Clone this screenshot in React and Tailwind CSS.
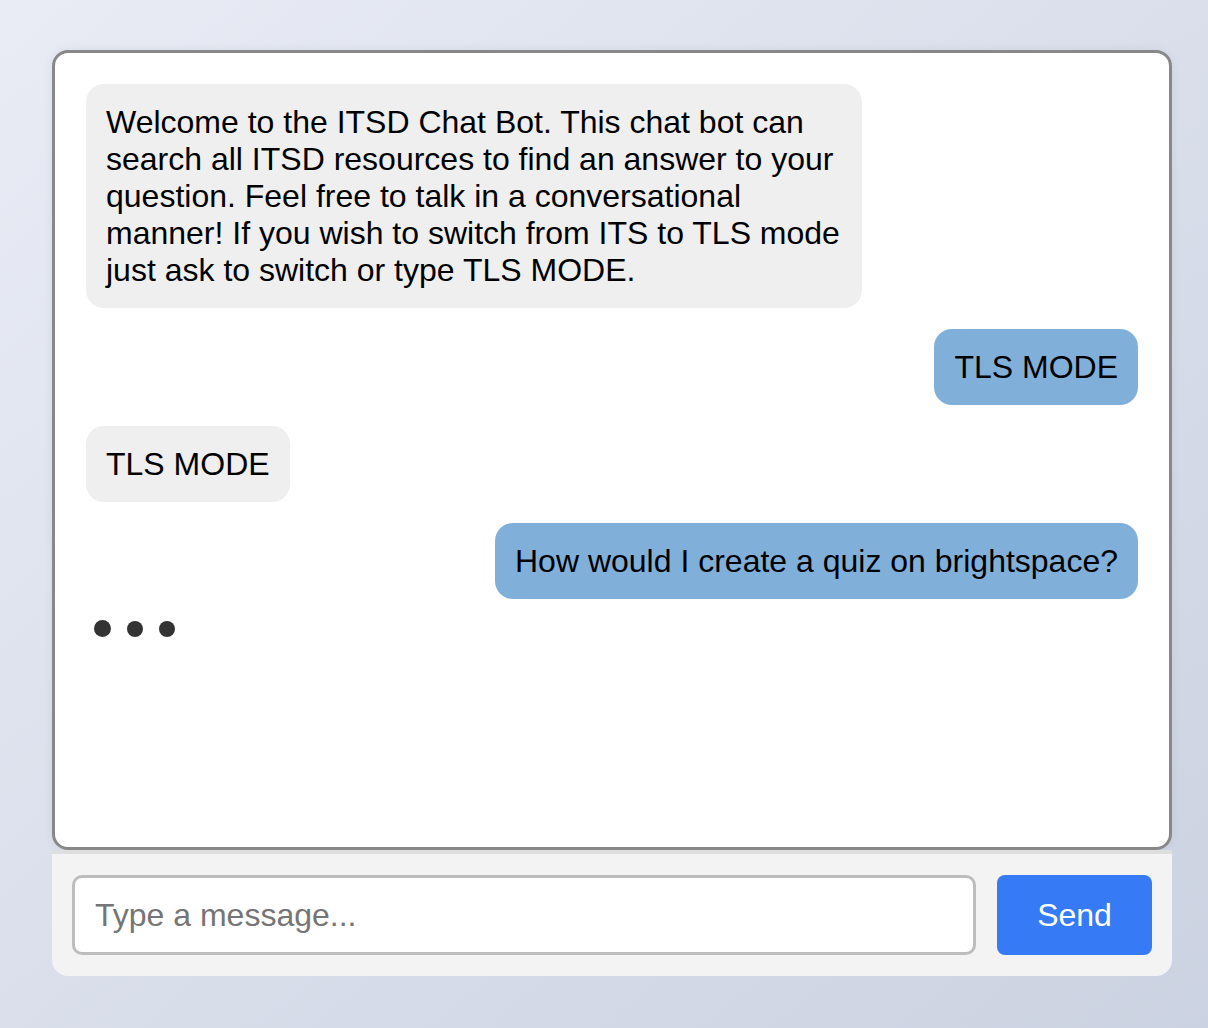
import React from 'react';

const messages = [
  {
    from: 'bot',
    text: 'Welcome to the ITSD Chat Bot. This chat bot can search all ITSD resources to find an answer to your question. Feel free to talk in a conversational manner! If you wish to switch from ITS to TLS mode just ask to switch or type TLS MODE.',
  },
  { from: 'user', text: 'TLS MODE' },
  { from: 'bot', text: 'TLS MODE' },
  { from: 'user', text: 'How would I create a quiz on brightspace?' },
];

export default function App() {
  return (
    <div
      className="min-h-screen w-full bg-gradient-to-br from-[#e9ecf5] to-[#cbd2e1] px-[52px] pt-[50px] pb-[53px]"
      style={{ fontFamily: '"Liberation Sans", Arial, sans-serif' }}
    >
      <div className="w-[1120px]">
        {/* Chat window */}
        <div className="h-[800px] rounded-[16px] border-[3px] border-[#888888] bg-white p-[31px] shadow-[0_0_12px_rgba(0,0,0,0.06)]">
          <div className="flex flex-col gap-[21px]">
            {messages.map((m, i) => (
              <Bubble key={i} from={m.from} text={m.text} />
            ))}
            <div className="flex items-center gap-[16px] pl-[8px]">
              <span className="h-[17px] w-[17px] rounded-full bg-[#333333]" />
              <span className="h-[16px] w-[16px] rounded-full bg-[#333333]" />
              <span className="h-[16px] w-[16px] rounded-full bg-[#333333]" />
            </div>
          </div>
        </div>

        {/* Input bar */}
        <div className="flex items-center gap-[21px] rounded-b-[16px] border-t-[4px] border-[#dedede] bg-[#f3f3f3] px-[20px] pt-[21px] pb-[21px]">
          <input
            autoFocus
            type="text"
            placeholder="Type a message..."
            className="h-[80px] flex-1 rounded-[10px] border-[3px] border-[#bdbdbd] bg-white px-[20px] text-[32px] text-black outline-none placeholder:text-[#757575]"
          />
          <button className="h-[80px] w-[155px] rounded-[8px] bg-[#367bf5] text-[32px] text-white">
            Send
          </button>
        </div>
      </div>
    </div>
  );
}

function Bubble({ from, text }) {
  const isUser = from === 'user';
  return (
    <div className={`flex ${isUser ? 'justify-end' : 'justify-start'}`}>
      <div
        className={`max-w-[776px] rounded-[18px] px-[20px] py-[19.5px] text-[32px] leading-[37px] text-black ${
          isUser ? 'bg-[#80afd9]' : 'bg-[#efefef]'
        }`}
      >
        {text}
      </div>
    </div>
  );
}
